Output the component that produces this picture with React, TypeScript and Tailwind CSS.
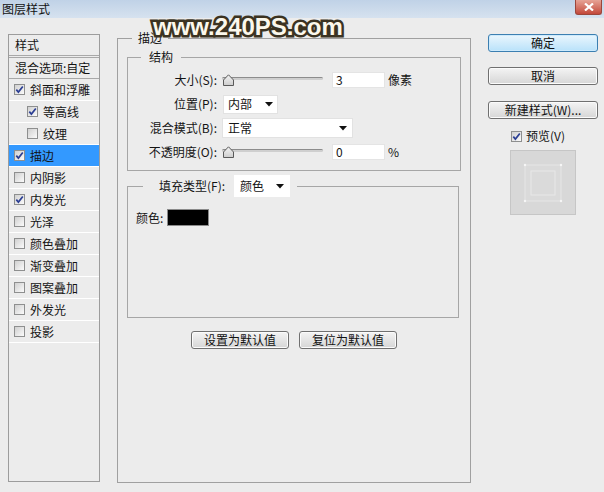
import React from "react";

const F = "font-['Noto_Sans_CJK_SC','Noto_Sans',sans-serif]";

function Check({ checked }: { checked: boolean }) {
  return (
    <span className="w-[11px] h-[11px] shrink-0 border border-[#8e8f8f] bg-linear-to-br from-[#d0d0d0] to-[#fbfbfb] flex items-center justify-center">
      {checked && (
        <svg width="9" height="9" viewBox="0 0 9 9">
          <path d="M1.3 4.6 L3.4 7.1 L7.8 1.4" fill="none" stroke="#2c3f94" strokeWidth="1.7" />
        </svg>
      )}
    </span>
  );
}

function Arrow() {
  return (
    <svg width="8" height="5" viewBox="0 0 8 5">
      <path d="M0 0 H8 L4 4.5 Z" fill="#111" />
    </svg>
  );
}

function Slider() {
  return (
    <div className="relative ml-[5px] w-[101px] h-[16px]">
      <div className="mt-[5px] h-[3px] rounded-[2px] border-t border-[#8c8c8c] bg-[#cfcfcf]" />
      <svg className="absolute left-[1px] top-[2px]" width="11" height="12" viewBox="0 0 11 12">
        <defs>
          <linearGradient id="tg" x1="0" y1="0" x2="0" y2="1">
            <stop offset="0" stopColor="#f4f4f4" />
            <stop offset="1" stopColor="#cdcdcd" />
          </linearGradient>
        </defs>
        <path d="M0.5 11.5 V6 L5.5 0.8 L10.5 6 V11.5 Z" fill="url(#tg)" stroke="#5a5a5a" strokeWidth="1" />
      </svg>
    </div>
  );
}

function Btn({ children, primary }: { children: React.ReactNode; primary?: boolean }) {
  return (
    <button
      className={
        primary
          ? "w-full h-[18px] rounded-[3px] border border-[#3c7fb1] bg-linear-to-b from-[#eaf6fd] to-[#b9e2fa] text-[12px] leading-[16px] text-[#111] shadow-[inset_0_0_0_1px_#cdeafc]"
          : "w-full h-[18px] rounded-[3px] border border-[#707070] bg-linear-to-b from-[#f4f4f4] to-[#d6d6d6] text-[12px] leading-[16px] text-[#111] shadow-[inset_0_0_0_1px_#fbfbfb]"
      }
    >
      {children}
    </button>
  );
}

const items: { t: string; c: boolean; l2?: boolean; sel?: boolean }[] = [
  { t: "斜面和浮雕", c: true },
  { t: "等高线", c: true, l2: true },
  { t: "纹理", c: false, l2: true },
  { t: "描边", c: true, sel: true },
  { t: "内阴影", c: false },
  { t: "内发光", c: true },
  { t: "光泽", c: false },
  { t: "颜色叠加", c: false },
  { t: "渐变叠加", c: false },
  { t: "图案叠加", c: false },
  { t: "外发光", c: false },
  { t: "投影", c: false },
];

export default function App() {
  return (
    <div className={`relative w-[604px] h-[492px] overflow-hidden bg-[#ececec] text-[#141414] ${F}`}>
      {/* title bar */}
      <div className="h-[18px] flex items-start justify-between bg-linear-to-b from-[#c0d2e7] to-[#d6e2ef]">
        <span className="pl-[2px] text-[12px] leading-[17px] text-[#111]">图层样式</span>
        <div className="mr-[2px] w-[27px] h-[15px] rounded-b-[3px] border border-t-0 border-[#9b463b] bg-linear-to-b from-[#e6a396] to-[#c2473a] flex items-center justify-center">
          <svg width="10" height="8" viewBox="0 0 10 8">
            <path d="M1 0.5 L9 7.5 M9 0.5 L1 7.5" stroke="#fff" strokeWidth="2.2" />
          </svg>
        </div>
      </div>

      <div className="flex items-start pl-[8px]">
        {/* left list */}
        <div className="mt-[16px] w-[92px] h-[448px] border border-[#9c9c9c] text-[12px]">
          <div className="h-[21px] flex items-center pl-[6px] border-b border-[#a8a8a8] leading-[14px]">样式</div>
          <div className="mt-[1px] h-[22px] flex items-center pl-[6px] border-t border-b border-[#a8a8a8] leading-[14px] whitespace-nowrap">
            混合选项:自定
          </div>
          {items.map((it) => (
            <div
              key={it.t}
              className={
                (it.sel ? "bg-[#3399ff] " : "") +
                (it.l2 ? "pl-[18px] " : "pl-[5px] ") +
                "h-[22px] flex items-center gap-[5px] border-b border-white leading-[14px]"
              }
            >
              <Check checked={it.c} />
              <span>{it.t}</span>
            </div>
          ))}
        </div>

        {/* main fieldset */}
        <fieldset className="ml-[17px] mt-[13px] w-[354px] h-[452px] min-w-0 border border-[#a0a0a0] px-[9px]">
          <legend className="ml-[5px] px-[6px] text-[12px] leading-[14px]">描边</legend>

          <fieldset className="mt-[5px] min-w-0 border border-[#a6a6a6] pt-[4px] pb-[6px] text-[12px]">
            <legend className="ml-[13px] px-[8px] leading-[14px]">结构</legend>

            <div className="h-[24px] flex items-center">
              <span className="w-[89px] text-right leading-[14px]">大小(S):</span>
              <Slider />
              <div className="ml-[9px] w-[53px] h-[16px] bg-white border border-[#e4e4e4] pl-[3px] leading-[14px]">3</div>
              <span className="ml-[3px] leading-[14px]">像素</span>
            </div>

            <div className="h-[24px] flex items-center">
              <span className="w-[89px] text-right leading-[14px]">位置(P):</span>
              <div className="ml-[6px] w-[55px] h-[19px] bg-white border border-[#e2e2e2] flex items-center justify-between pl-[4px] pr-[4px]">
                <span className="leading-[14px]">内部</span>
                <Arrow />
              </div>
            </div>

            <div className="h-[24px] flex items-center">
              <span className="w-[89px] text-right leading-[14px]">混合模式(B):</span>
              <div className="ml-[5px] w-[131px] h-[20px] bg-white border border-[#e2e2e2] flex items-center justify-between pl-[5px] pr-[5px]">
                <span className="leading-[14px]">正常</span>
                <Arrow />
              </div>
            </div>

            <div className="h-[24px] flex items-center">
              <span className="w-[89px] text-right leading-[14px]">不透明度(O):</span>
              <Slider />
              <div className="ml-[9px] w-[53px] h-[16px] bg-white border border-[#e4e4e4] pl-[3px] leading-[14px]">0</div>
              <span className="ml-[3px] leading-[14px]">%</span>
            </div>
          </fieldset>

          <fieldset className="mt-[4px] mr-[2px] h-[143px] min-w-0 border border-[#a6a6a6] text-[12px]">
            <legend className="ml-[15px] pl-[16px] pr-[7px]">
              <span className="inline-flex items-center gap-[9px]">
                <span className="leading-[14px]">填充类型(F):</span>
                <span className="w-[56px] h-[22px] bg-white flex items-center justify-between pl-[6px] pr-[6px]">
                  <span className="leading-[14px]">颜色</span>
                  <Arrow />
                </span>
              </span>
            </legend>
            <div className="pt-[12px] pl-[8px] flex items-center gap-[4px]">
              <span className="leading-[14px]">颜色:</span>
              <div className="w-[42px] h-[17px] bg-black border border-[#8a8a8a]" />
            </div>
          </fieldset>

          <div className="mt-[8px] flex justify-center gap-[10px]">
            <div className="w-[98px]">
              <Btn>设置为默认值</Btn>
            </div>
            <div className="w-[98px]">
              <Btn>复位为默认值</Btn>
            </div>
          </div>
        </fieldset>

        {/* right column */}
        <div className="ml-[17px] mt-[16px] w-[110px] flex flex-col">
          <Btn primary>确定</Btn>
          <div className="mt-[10px]">
            <Btn>取消</Btn>
          </div>
          <div className="mt-[10px]">
            <Btn>新建样式(W)...</Btn>
          </div>
          <div className="mt-[8px] h-[16px] pl-[23px] flex items-center gap-[4px] text-[12px]">
            <Check checked={true} />
            <span className="leading-[14px]">预览(V)</span>
          </div>
          <div className="mt-[6px] ml-[22px] w-[66px] h-[65px] border border-[#c6c6c6] bg-[#d8d8d8] flex items-center justify-center">
            <svg width="44" height="44" viewBox="0 0 44 44">
              <rect x="4" y="4" width="36" height="36" fill="#dadada" stroke="#e6e6e6" strokeWidth="1" />
              <rect x="10" y="10" width="24" height="24" fill="none" stroke="#eeeeee" strokeWidth="1" opacity="0.7" />
              <circle cx="4" cy="4" r="1.2" fill="#f6f6f6" />
              <circle cx="40" cy="4" r="1.2" fill="#f6f6f6" />
              <circle cx="4" cy="40" r="1.2" fill="#f6f6f6" />
              <circle cx="40" cy="40" r="1.2" fill="#f6f6f6" />
            </svg>
          </div>
        </div>
      </div>

      {/* watermark */}
      <div className="pointer-events-none absolute left-[153px] top-[14px] font-['Liberation_Sans',sans-serif] font-bold text-[24px] leading-[26px] tracking-[0px] text-[#fbf8ec] [-webkit-text-stroke:5px_#3b3322] [paint-order:stroke_fill]">
        www.240PS.com
      </div>
    </div>
  );
}
